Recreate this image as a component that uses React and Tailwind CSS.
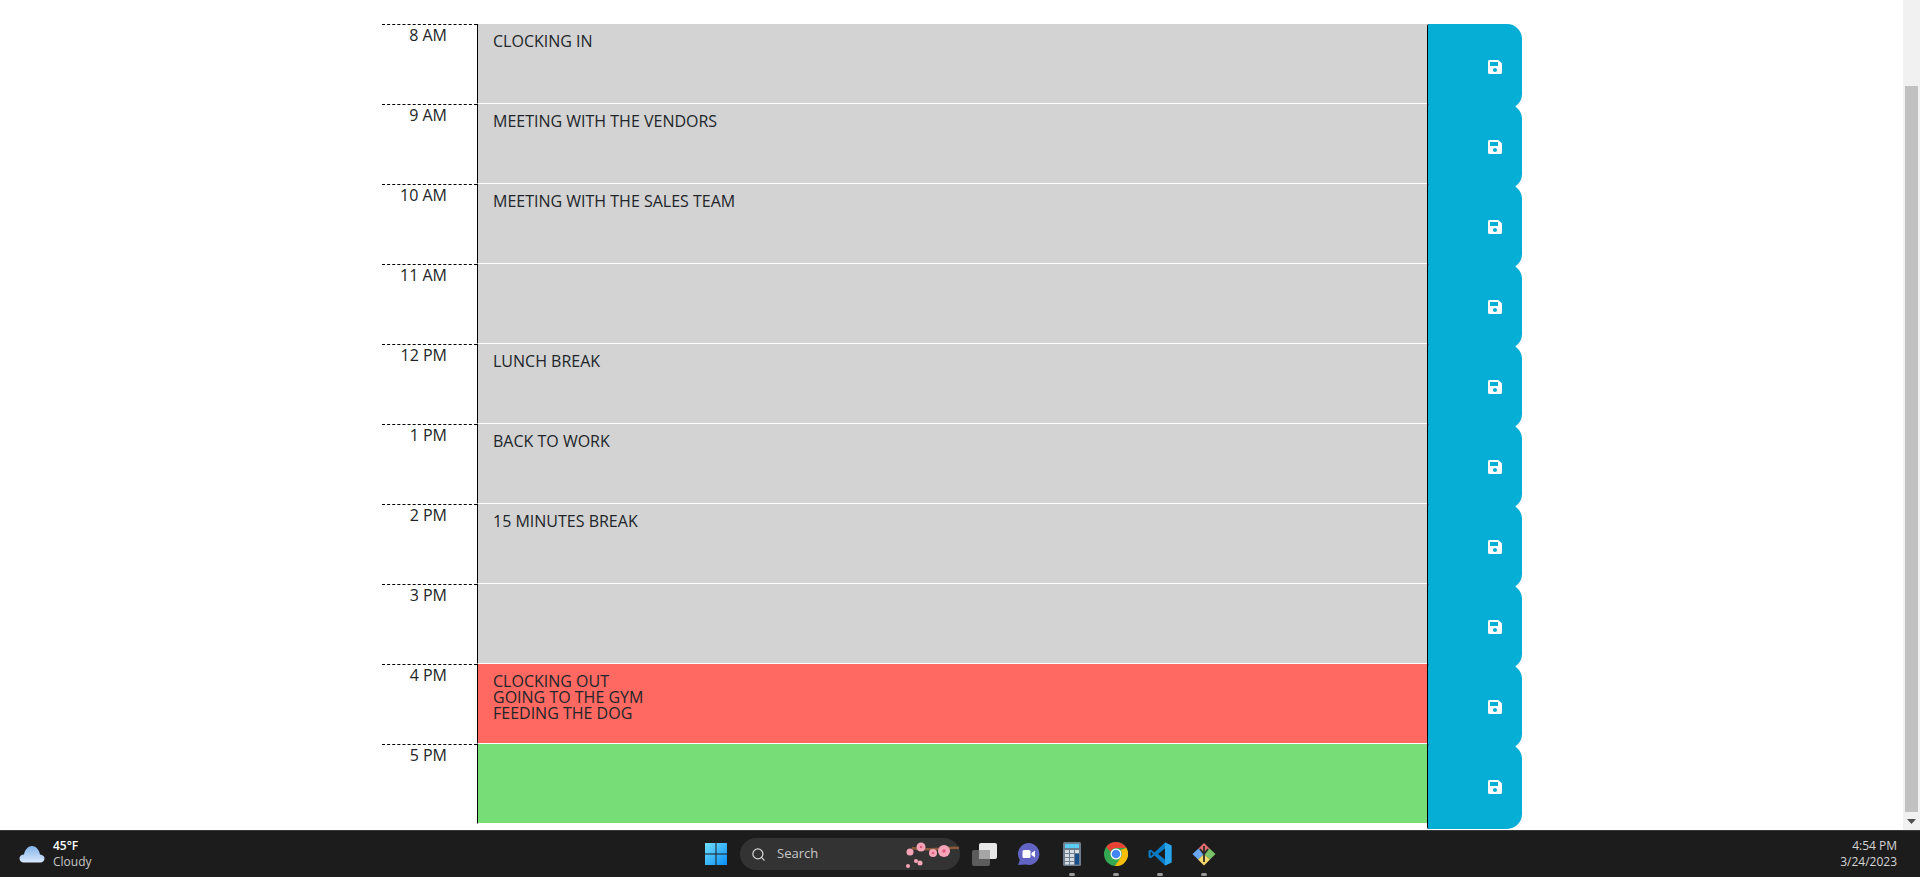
import React from 'react';
import { FaSave } from 'react-icons/fa';
import { Search } from 'lucide-react';

const hours = [
  { label: '8 AM', text: 'CLOCKING IN', color: 'bg-[#d3d3d3]' },
  { label: '9 AM', text: 'MEETING WITH THE VENDORS', color: 'bg-[#d3d3d3]' },
  { label: '10 AM', text: 'MEETING WITH THE SALES TEAM', color: 'bg-[#d3d3d3]' },
  { label: '11 AM', text: '', color: 'bg-[#d3d3d3]' },
  { label: '12 PM', text: 'LUNCH BREAK', color: 'bg-[#d3d3d3]' },
  { label: '1 PM', text: 'BACK TO WORK', color: 'bg-[#d3d3d3]' },
  { label: '2 PM', text: '15 MINUTES BREAK', color: 'bg-[#d3d3d3]' },
  { label: '3 PM', text: '', color: 'bg-[#d3d3d3]' },
  { label: '4 PM', text: 'CLOCKING OUT\nGOING TO THE GYM\nFEEDING THE DOG', color: 'bg-[#ff6961]' },
  { label: '5 PM', text: '', color: 'bg-[#77dd77]' },
];

const TimeBlock = ({ hour }) => (
  <div className="flex h-[80px] items-start">
    <div className="h-[80px] w-[95px] border-t border-dashed border-black pr-[30px] text-right text-[16px] leading-[20px] text-[#212529]">
      {hour.label}
    </div>
    <div className={`h-[80px] w-[950px] whitespace-pre-line border-b border-l border-white border-l-black pl-[15px] pt-[9px] text-[16px] leading-[16px] text-[#212529] ${hour.color}`}>
      {hour.text}
    </div>
    <button className="flex h-[85px] w-[95px] shrink-0 items-center justify-center rounded-r-[15px] rounded-l-[2px] border-l border-black bg-[#06aed5] pl-[40px] text-white">
      <FaSave className="h-4 w-4" />
    </button>
  </div>
);

const WeatherIcon = () => (
  <svg width="26" height="18" viewBox="0 0 26 18">
    <defs>
      <linearGradient id="cloud" x1="0" y1="0" x2="0" y2="1">
        <stop offset="0" stopColor="#7fb2ea" />
        <stop offset="1" stopColor="#dbe9fb" />
      </linearGradient>
    </defs>
    <path d="M5 17.5C2 17.5 .5 15.5 .5 13.5S2 9.5 5 9.5C6 4 9.500 1 13 1s7 3 8 8.500c3 .5 4.500 2 4.500 4s-1.500 4-4.500 4Z" fill="url(#cloud)" />
  </svg>
);

const WindowsIcon = () => (
  <svg width="24" height="24" viewBox="0 0 24 24">
    <defs>
      <linearGradient id="win" x1="0" y1="0" x2="1" y2="1">
        <stop offset="0" stopColor="#6fe0fd" />
        <stop offset="1" stopColor="#0a8cf5" />
      </linearGradient>
    </defs>
    <path d="M1 1h10.500v10.500H1zM12.500 1H23v10.500H12.500zM1 12.500h10.500V23H1zM12.500 12.500H23V23H12.500z" fill="url(#win)" />
  </svg>
);

const Blossoms = () => (
  <svg width="54" height="28" viewBox="0 0 54 28">
    <path d="M6 8C16 10 22 9 30 9s14-2 23-1" stroke="#8b5a3c" strokeWidth="2.500" fill="none" />
    <g fill="#f6a5b8">
      <circle cx="4" cy="12" r="3.500" />
      <circle cx="15" cy="7" r="4.500" />
      <circle cx="27" cy="13" r="4" />
      <circle cx="38" cy="11" r="6" />
      <circle cx="10" cy="21" r="2" />
      <circle cx="14" cy="23" r="2.500" />
      <circle cx="2" cy="26" r="2" />
    </g>
    <g fill="#e8597f">
      <circle cx="15" cy="7" r="1.300" />
      <circle cx="27" cy="13" r="1.300" />
      <circle cx="38" cy="11" r="1.800" />
    </g>
  </svg>
);

const TaskViewIcon = () => (
  <svg width="25" height="23" viewBox="0 0 25 23">
    <rect x="0" y="7" width="18" height="16" rx="2" fill="#5c5c5c" />
    <rect x="7" y="0" width="18" height="16" rx="2" fill="#e8e8e8" />
    <rect x="7" y="7" width="11" height="9" fill="#a5a5a5" />
  </svg>
);

const MeetIcon = () => (
  <svg width="24" height="24" viewBox="0 0 24 24">
    <path d="M12.500 1a11 11 0 1 1-3 21.600L2 23l1.800-5A11 11 0 0 1 12.500 1Z" fill="#6264c4" />
    <rect x="6.500" y="8" width="8" height="8" rx="1.500" fill="#fff" />
    <path d="M15.500 11l3.500-2.500v7L15.500 13Z" fill="#fff" />
  </svg>
);

const CalcIcon = () => (
  <svg width="18" height="24" viewBox="0 0 18 24">
    <rect width="18" height="24" rx="1.500" fill="#6d7d8b" />
    <rect x="2" y="2" width="14" height="4" fill="#5bcdf5" />
    <g fill="#d5dde3">
      <rect x="2" y="8" width="4" height="3" />
      <rect x="7" y="8" width="4" height="3" />
      <rect x="12" y="8" width="4" height="3" />
      <rect x="2" y="12" width="4" height="3" />
      <rect x="7" y="12" width="4" height="3" />
      <rect x="2" y="16" width="4" height="3" />
      <rect x="7" y="16" width="4" height="3" />
      <rect x="2" y="20" width="4" height="2.500" />
      <rect x="7" y="20" width="4" height="2.500" />
    </g>
    <rect x="12" y="12" width="4" height="10.500" fill="#17508f" />
  </svg>
);

const ChromeIcon = () => (
  <svg width="24" height="24" viewBox="0 0 24 24">
    <circle cx="12" cy="12" r="12" fill="#34a853" />
    <path d="M12 0a12 12 0 0 1 10.400 6H12a6 6 0 0 0-5.600 3.800L2.300 5A12 12 0 0 1 12 0Z" fill="#ea4335" />
    <path d="M22.400 6A12 12 0 0 1 11 24l5.600-8.500A6 6 0 0 0 16.500 8Z" fill="#fbbc04" />
    <circle cx="12" cy="12" r="5.500" fill="#fff" />
    <circle cx="12" cy="12" r="4.300" fill="#4285f4" />
  </svg>
);

const VsCodeIcon = () => (
  <svg width="24" height="24" viewBox="0 0 24 24">
    <path d="M17 .5 23.500 3.500v17L17 23.500 6.500 13.500 2.500 16.500.5 15v-6l2-1.500 4 3Z" fill="#0a7cc6" />
    <path d="M17 .5 23.500 3.500v17L17 23.500Z" fill="#2aa5ec" />
    <path d="M17 6.500 10 12l7 5.500Z" fill="#1c1c1c" />
    <path d="M2.700 9.500 5 12l-2.300 2.500Z" fill="#1c1c1c" />
  </svg>
);

const GitIcon = () => (
  <svg width="24" height="24" viewBox="0 0 24 24">
    <path d="M12 12 6.500 6.500 12 1l5.500 5.500Z" fill="#e56b6f" transform="rotate(0 12 12)" />
    <path d="M12 12 17.500 6.500 23.500 12 18 17.500Z" fill="#79c267" />
    <path d="M12 12 6.500 6.500.5 12 6 17.500Z" fill="#6aa7f0" />
    <path d="M12 12 6 17.500 12 23.500 18 17.500Z" fill="#f6d96b" />
    <path d="M12 4v16M8 7l4 5 4-5" stroke="#2b2b2b" strokeWidth="1.800" fill="none" />
  </svg>
);

const TrayApp = ({ children, running, className = '' }) => (
  <div className={`relative flex h-[47px] w-[44px] items-center justify-center ${className}`}>
    {children}
    {running && <span className="absolute bottom-[2px] h-[3px] w-[6px] rounded-full bg-[#9a9a9a]" />}
  </div>
);

export default function App() {
  return (
    <div className="flex h-[877px] flex-col overflow-hidden bg-white font-['Open_Sans',sans-serif]">
      <div className="flex h-[830px]">
        <main className="h-[830px] flex-1 overflow-hidden pl-[382px] pt-[24px]">
          {hours.map((hour) => (
            <TimeBlock key={hour.label} hour={hour} />
          ))}
        </main>
        <div className="flex w-[17px] flex-col items-center bg-[#f1f1f1] pt-[86px]">
          <div className="h-[726px] w-[13px] bg-[#c1c1c1]" />
          <svg className="mt-[7px]" width="9" height="5" viewBox="0 0 9 5">
            <path d="M0 0h9L4.500 5Z" fill="#505050" />
          </svg>
        </div>
      </div>
      <footer className="relative flex h-[47px] items-center border-t border-[#3a3a3a] bg-[#1c1c1c] font-['Inter',sans-serif] text-white">
        <div className="ml-[19px] flex items-center gap-[8px]">
          <WeatherIcon />
          <div className="text-[12px] leading-[16px]">
            <div className="font-['Open_Sans',sans-serif] font-semibold">45°F</div>
            <div className="font-['Open_Sans',sans-serif] text-[#c8c8c8]">Cloudy</div>
          </div>
        </div>
        <div className="absolute left-[694px] top-0 flex h-[46px] items-center">
          <TrayApp><WindowsIcon /></TrayApp>
          <div className="ml-[2px] flex h-[32px] w-[220px] items-center rounded-full bg-[#333333] pl-[11px]">
            <Search className="h-[15px] w-[15px] text-[#d5d5d5]" />
            <span className="ml-[11px] font-['Open_Sans',sans-serif] text-[13px] text-[#c8c8c8]">Search</span>
            <span className="ml-auto"><Blossoms /></span>
          </div>
          <TrayApp className="ml-[2px]"><TaskViewIcon /></TrayApp>
          <TrayApp><MeetIcon /></TrayApp>
          <TrayApp running><CalcIcon /></TrayApp>
          <TrayApp running><ChromeIcon /></TrayApp>
          <TrayApp running><VsCodeIcon /></TrayApp>
          <TrayApp running><GitIcon /></TrayApp>
        </div>
        <div className="ml-auto mr-[23px] text-right font-['Open_Sans',sans-serif] text-[12px] leading-[16px] text-[#d5d5d5]">
          <div>4:54 PM</div>
          <div>3/24/2023</div>
        </div>
      </footer>
    </div>
  );
}
